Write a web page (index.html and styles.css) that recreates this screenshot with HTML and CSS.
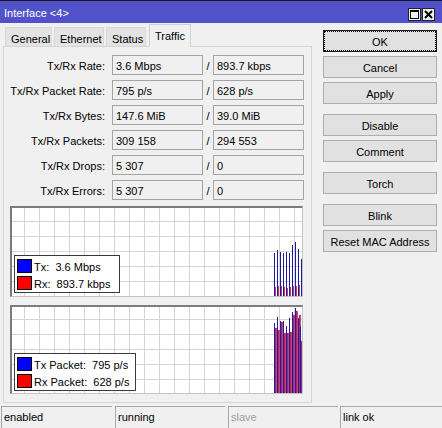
FILE: index.html
```html
<!DOCTYPE html>
<html>
<head>
<meta charset="utf-8">
<link rel="stylesheet" href="styles.css">
</head>
<body>
<div class="titlebar">
  <span class="title">Interface &lt;4&gt;</span>
  <div class="tbtns">
    <span class="tbtn"><svg width="11" height="11" viewBox="0 0 11 11"><rect x="1.5" y="1.5" width="8" height="8" fill="none" stroke="#000" stroke-width="1"/><rect x="1" y="1" width="9" height="2" fill="#000"/></svg></span>
    <span class="tbtn"><svg width="11" height="11" viewBox="0 0 11 11"><path d="M2 2 L9 9 M9 2 L2 9" stroke="#000" stroke-width="2"/></svg></span>
  </div>
</div>
<div class="main">
  <div class="left">
    <div class="tabs">
      <div class="tab w-general">General</div>
      <div class="tab w-eth">Ethernet</div>
      <div class="tab w-status">Status</div>
      <div class="tab sel w-traffic">Traffic</div>
    </div>
    <div class="panel">
      <div class="rows">
        <div class="row"><span class="lbl">Tx/Rx Rate:</span><span class="fld">3.6 Mbps</span><span class="sl">/</span><span class="fld">893.7 kbps</span></div>
        <div class="row"><span class="lbl">Tx/Rx Packet Rate:</span><span class="fld">795 p/s</span><span class="sl">/</span><span class="fld">628 p/s</span></div>
        <div class="row"><span class="lbl">Tx/Rx Bytes:</span><span class="fld">147.6 MiB</span><span class="sl">/</span><span class="fld">39.0 MiB</span></div>
        <div class="row"><span class="lbl">Tx/Rx Packets:</span><span class="fld">309 158</span><span class="sl">/</span><span class="fld">294 553</span></div>
        <div class="row"><span class="lbl">Tx/Rx Drops:</span><span class="fld">5 307</span><span class="sl">/</span><span class="fld">0</span></div>
        <div class="row"><span class="lbl">Tx/Rx Errors:</span><span class="fld">5 307</span><span class="sl">/</span><span class="fld">0</span></div>
      </div>
      <div class="graph g1">
        <svg width="290" height="88" viewBox="0 0 290 88">
          <path d="M12.5 0V88M27.5 0V88M42.5 0V88M57.5 0V88M72.5 0V88M87.5 0V88M102.5 0V88M117.5 0V88M132.5 0V88M147.5 0V88M162.5 0V88M177.5 0V88M192.5 0V88M207.5 0V88M222.5 0V88M237.5 0V88M252.5 0V88M267.5 0V88M282.5 0V88M0 13.5H290M0 28.5H290M0 43.5H290M0 58.5H290M0 73.5H290" stroke="#d4d4d4" stroke-width="1"/>
          <g fill="#c8386a">
            <rect x="262" y="79" width="2" height="9"/><rect x="265" y="78" width="2" height="10"/><rect x="268" y="78" width="2" height="10"/><rect x="271" y="79" width="2" height="9"/><rect x="274" y="80" width="2" height="8"/><rect x="277" y="79" width="2" height="9"/><rect x="280" y="78" width="2" height="10"/><rect x="283" y="78" width="2" height="10"/><rect x="286" y="77" width="2" height="11"/><rect x="289" y="78" width="1" height="10"/>
          </g>
          <g fill="#1c1c9c">
            <rect x="262" y="45" width="1" height="43"/><rect x="265" y="42" width="1" height="46"/><rect x="268" y="44" width="1" height="44"/><rect x="271" y="45" width="1" height="43"/><rect x="274" y="44" width="1" height="44"/><rect x="277" y="45" width="1" height="43"/><rect x="280" y="37" width="1" height="51"/><rect x="283" y="34" width="1" height="54"/><rect x="286" y="41" width="1" height="47"/><rect x="289" y="51" width="1" height="37"/>
          </g>
        </svg>
        <div class="legend l1">
          <div class="li"><span class="sq blue"></span><span class="lt">Tx:  3.6 Mbps</span></div>
          <div class="li"><span class="sq red"></span><span class="lt">Rx:  893.7 kbps</span></div>
        </div>
      </div>
      <div class="graph g2">
        <svg width="290" height="86" viewBox="0 0 290 86">
          <path d="M12.5 0V86M27.5 0V86M42.5 0V86M57.5 0V86M72.5 0V86M87.5 0V86M102.5 0V86M117.5 0V86M132.5 0V86M147.5 0V86M162.5 0V86M177.5 0V86M192.5 0V86M207.5 0V86M222.5 0V86M237.5 0V86M252.5 0V86M267.5 0V86M282.5 0V86M0 12.5H290M0 27.5H290M0 42.5H290M0 57.5H290M0 72.5H290" stroke="#d4d4d4" stroke-width="1"/>
          <g fill="#9a2a78">
            <rect x="263" y="21" width="2" height="65"/><rect x="266" y="23" width="2" height="63"/><rect x="269" y="15" width="2" height="71"/><rect x="272" y="26" width="2" height="60"/><rect x="275" y="26" width="2" height="60"/><rect x="278" y="25" width="2" height="61"/><rect x="281" y="8" width="2" height="78"/><rect x="284" y="4" width="2" height="82"/><rect x="287" y="8" width="2" height="78"/><rect x="289" y="34" width="1" height="52"/>
          </g>
          <g fill="#d04070">
            <rect x="264" y="21" width="1" height="65"/><rect x="267" y="23" width="1" height="63"/><rect x="270" y="15" width="1" height="71"/><rect x="273" y="26" width="1" height="60"/><rect x="276" y="26" width="1" height="60"/><rect x="279" y="25" width="1" height="61"/><rect x="282" y="8" width="1" height="78"/><rect x="285" y="4" width="1" height="82"/><rect x="288" y="8" width="1" height="78"/>
          </g>
          <g fill="#2a1a9a">
            <rect x="262" y="16" width="1" height="70"/><rect x="265" y="10" width="1" height="76"/><rect x="268" y="14" width="1" height="72"/><rect x="271" y="14" width="1" height="72"/><rect x="274" y="19" width="1" height="67"/><rect x="277" y="11" width="1" height="75"/><rect x="280" y="5" width="1" height="81"/><rect x="283" y="1" width="1" height="85"/><rect x="286" y="11" width="1" height="75"/><rect x="288" y="20" width="1" height="66"/>
          </g>
        </svg>
        <div class="legend l2">
          <div class="li"><span class="sq blue"></span><span class="lt">Tx Packet:  795 p/s</span></div>
          <div class="li"><span class="sq red"></span><span class="lt">Rx Packet:  628 p/s</span></div>
        </div>
      </div>
    </div>
  </div>
  <div class="right">
    <div class="btn ok">OK</div>
    <div class="btn">Cancel</div>
    <div class="btn">Apply</div>
    <div class="btn gap">Disable</div>
    <div class="btn">Comment</div>
    <div class="btn gap">Torch</div>
    <div class="btn gap">Blink</div>
    <div class="btn">Reset MAC Address</div>
  </div>
</div>
<div class="status">
  <div class="cell c1">enabled</div>
  <div class="cell c2">running</div>
  <div class="cell c3 dim">slave</div>
  <div class="cell c4">link ok</div>
</div>
</body>
</html>
```
FILE: styles.css
```css
html, body {
  margin: 0;
  padding: 0;
}
body {
  width: 442px;
  height: 428px;
  overflow: hidden;
  background: #f0f0f0;
  font-family: "Liberation Sans", Arial, sans-serif;
  font-size: 11px;
  color: #000;
}
.titlebar {
  height: 22px;
  border-top: 1px solid #1a1a1a;
  background: #5151c9;
  display: flex;
  align-items: center;
  justify-content: space-between;
  padding: 0 7px 0 4px;
}
.title {
  color: #fff;
  font-size: 11px;
  padding-top: 1px;
}
.tbtns {
  display: flex;
  gap: 1px;
  padding-top: 4px;
}
.tbtn {
  width: 13px;
  height: 13px;
  box-sizing: border-box;
  border: 1px solid #222;
  background: #f0f0f0;
  display: flex;
  align-items: center;
  justify-content: center;
}
.tbtn svg { display: block; }
.main {
  display: flex;
  height: 382px;
}
.left {
  margin-left: 3px;
  width: 309px;
  margin-top: 1px;
}
.tabs {
  display: flex;
  align-items: flex-end;
  height: 23px;
  padding-left: 2px;
  margin-bottom: -1px;
  position: relative;
  z-index: 1;
}
.tab {
  box-sizing: border-box;
  height: 19px;
  background: #e3e3e3;
  border: 1px solid #d9d9d9;
  border-bottom: none;
  padding-top: 3px;
  padding-left: 5px;
  display: flex;
  align-items: center;
  margin-right: 2px;
  margin-bottom: 1px;
}
.tab.sel {
  height: 23px;
  background: #f0f0f0;
  border-color: #d0d0d0;
  padding-top: 0;
  margin-bottom: 0;
  padding-left: 5px;
}
.w-general { width: 47px; }
.w-eth { width: 50px; }
.w-status { width: 40px; margin-right: 3px; }
.w-traffic { width: 42px; }
.panel {
  box-sizing: border-box;
  height: 357px;
  border: 1px solid #d5d5d5;
  background: #f0f0f0;
  padding-top: 8px;
}
.rows {
  display: flex;
  flex-direction: column;
  gap: 5px;
}
.row {
  display: flex;
  height: 20px;
  align-items: center;
}
.lbl {
  width: 101px;
  margin-right: 7px;
  text-align: right;
  padding-top: 2px;
}
.fld {
  box-sizing: border-box;
  width: 91px;
  height: 20px;
  border: 1px solid #a4a4a4;
  padding: 2px 0 0 3px;
  display: flex;
  align-items: center;
}
.sl {
  width: 10px;
  text-align: center;
  padding-top: 2px;
}
.graph {
  position: relative;
  margin-left: 6px;
  width: 293px;
  box-sizing: border-box;
  border-top: 2px solid #7c7c7c;
  border-left: 2px solid #7c7c7c;
  border-right: 1px solid #c4c4c4;
  border-bottom: 1px solid #c4c4c4;
  background: #fff;
}
.graph svg { display: block; }
.g1 { margin-top: 6px; height: 91px; }
.g2 { margin-top: 8px; height: 89px; }
.legend {
  position: absolute;
  left: 2px;
  box-sizing: border-box;
  height: 38px;
  background: #fff;
  border: 1px solid #3a3a3a;
  padding: 3px 0 0 2px;
  display: flex;
  flex-direction: column;
  gap: 3px;
}
.l1 { top: 47px; width: 106px; }
.l2 { top: 46px; width: 122px; }
.li {
  display: flex;
  align-items: center;
  height: 14px;
}
.sq {
  box-sizing: border-box;
  width: 15px;
  height: 14px;
  border: 1px solid #000;
  margin-right: 2px;
}
.sq.blue { background: #0000ff; }
.sq.red { background: #ff0000; }
.lt {
  white-space: pre;
  font-size: 11px;
  padding-top: 1px;
}
.right {
  margin-left: 11px;
  width: 114px;
  padding-top: 7px;
  display: flex;
  flex-direction: column;
  gap: 4px;
}
.btn {
  box-sizing: border-box;
  height: 22px;
  border: 1px solid #adadad;
  background: #e1e1e1;
  display: flex;
  align-items: center;
  justify-content: center;
  padding-top: 1px;
}
.btn.ok {
  border-color: #1a1a1a;
  outline: 1px dotted #000;
  outline-offset: -2px;
}
.btn.gap { margin-top: 6px; }
.status {
  display: flex;
  margin-top: 1px;
  padding-left: 1px;
  height: 23px;
}
.cell {
  box-sizing: border-box;
  height: 23px;
  border-top: 1px solid #a8a8a8;
  border-left: 1px solid #a8a8a8;
  padding: 4px 0 0 2px;
  margin-right: 3px;
}
.c1 { width: 111px; }
.c2 { width: 110px; }
.c3 { width: 110px; margin-right: 2px; }
.c4 { width: 102px; margin-right: 0; }
.dim { color: #a0a0a0; }
```
